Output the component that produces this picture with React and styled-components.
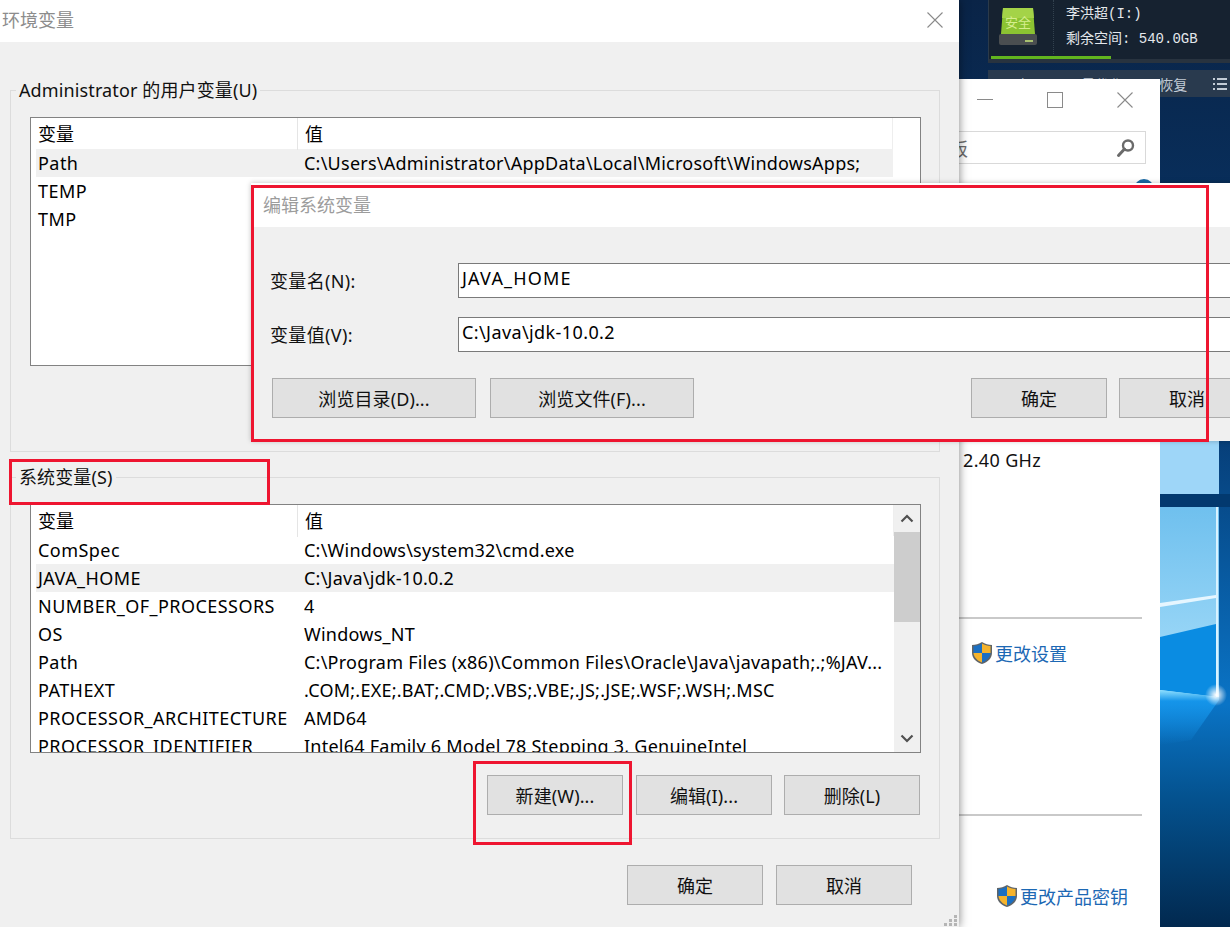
import React from "react";
import styled, { createGlobalStyle } from "styled-components";

const GlobalStyle = createGlobalStyle`
  html, body {
    margin: 0;
    padding: 0;
    background: #0b2a52;
  }
  body {
    font-family: "Noto Sans", "Noto Sans CJK SC", sans-serif;
    font-size: 18px;
    color: #000;
  }
  * { box-sizing: border-box; }
`;

const userVars = [
  ["Path", "C:\\Users\\Administrator\\AppData\\Local\\Microsoft\\WindowsApps;"],
  ["TEMP", ""],
  ["TMP", ""],
];

const systemVars = [
  ["ComSpec", "C:\\Windows\\system32\\cmd.exe"],
  ["JAVA_HOME", "C:\\Java\\jdk-10.0.2"],
  ["NUMBER_OF_PROCESSORS", "4"],
  ["OS", "Windows_NT"],
  ["Path", "C:\\Program Files (x86)\\Common Files\\Oracle\\Java\\javapath;.;%JAV..."],
  ["PATHEXT", ".COM;.EXE;.BAT;.CMD;.VBS;.VBE;.JS;.JSE;.WSF;.WSH;.MSC"],
  ["PROCESSOR_ARCHITECTURE", "AMD64"],
  ["PROCESSOR_IDENTIFIER", "Intel64 Family 6 Model 78 Stepping 3, GenuineIntel"],
];

const Screen = styled.div`
  position: relative;
  display: flex;
  width: 1230px;
  height: 927px;
  overflow: hidden;
`;

const MainDialog = styled.div`
  position: relative;
  z-index: 2;
  flex: 0 0 959px;
  display: flex;
  flex-direction: column;
  background: #f0f0f0;
  box-shadow: 0 0 9px rgba(0, 0, 0, 0.5);
`;

const TitleBar = styled.div`
  display: flex;
  align-items: center;
  justify-content: space-between;
  height: 42px;
  padding: 0 16px 3px 2px;
  background: #fff;
  color: #8c8c8c;
  line-height: 1;
`;

const Body = styled.div`
  display: flex;
  flex-direction: column;
  padding: 36px 19px 0 10px;
`;

const Group = styled.fieldset`
  height: 374px;
  margin: 0 0 13px;
  padding: 15px 18px 0 19px;
  border: 1px solid #dcdcdc;
  min-width: 0;
`;

const GroupTitle = styled.legend`
  margin-left: -14px;
  padding: 0 3px;
  height: 24px;
  line-height: 24px;
  letter-spacing: 0.12px;
  white-space: nowrap;
  color: #111;
`;

const List = styled.div`
  display: flex;
  height: 249px;
  overflow: hidden;
  background: #fff;
  border: 1px solid #828282;
`;

const ListContent = styled.div`
  flex: 1;
  min-width: 0;
  overflow: hidden;
`;

const ListHeader = styled.div`
  display: grid;
  grid-template-columns: 260px 1fr;
  height: 31px;
  line-height: 32px;
  padding-left: 7px;
  border-right: 1px solid #eee;

  span + span {
    padding-left: 7px;
    border-left: 1px solid #e5e5e5;
    margin-left: -1px;
  }
`;

const Row = styled.div`
  display: grid;
  grid-template-columns: 266px 1fr;
  height: 28px;
  line-height: 28px;
  margin-left: 5px;
  padding-left: 2px;
  white-space: nowrap;
  letter-spacing: 0.24px;
  background: ${(p) => (p.$selected ? "#f0f0f0" : "transparent")};

  span:first-child {
    letter-spacing: 0.45px;
  }
`;

const BlankGutter = styled.div`
  flex: 0 0 27px;
`;

const Scrollbar = styled.div`
  flex: 0 0 26px;
  display: flex;
  flex-direction: column;
  align-items: center;
  background: #f0f0f0;
`;

const ScrollArrow = styled.div`
  display: flex;
  align-items: center;
  justify-content: center;
  height: 27px;
  width: 100%;
`;

const ScrollThumb = styled.div`
  width: 100%;
  height: 90px;
  background: #cdcdcd;
`;

const ScrollTrack = styled.div`
  flex: 1;
`;

const Button = styled.button`
  flex: 0 0 ${(p) => p.$width || 136}px;
  height: 40px;
  padding: 0 0 1px;
  background: #e1e1e1;
  border: 1px solid #adadad;
  border-radius: 0;
  font: inherit;
  letter-spacing: 0.1px;
  color: #111;
  white-space: nowrap;
`;

const GroupButtons = styled.div`
  display: flex;
  justify-content: flex-end;
  gap: 12px;
  margin-top: 22px;
  margin-right: 1px;

  button:first-child {
    margin-right: 1px;
  }
`;

const DialogButtons = styled.div`
  display: flex;
  justify-content: flex-end;
  gap: 13px;
  margin-right: 28px;
  margin-top: 13px;
`;

const Grip = styled.svg`
  position: absolute;
  right: 1px;
  bottom: 0;
`;

const Desktop = styled.div`
  position: relative;
  flex: 1;
  background: linear-gradient(180deg, #0a1f3e 0%, #0b2a55 100%);
`;

const Wallpaper = styled.svg`
  position: absolute;
  top: 0;
  left: 0;
`;

const DriveWidget = styled.div`
  position: relative;
  display: flex;
  height: 63px;
  margin-left: 29px;
  padding: 8px 0 0 10px;
  background: #162230;
  border-left: 1px solid #2b3a4a;
  border-bottom: 4px solid #28333f;
`;

const DriveProgress = styled.div`
  position: absolute;
  left: 2px;
  bottom: 0;
  width: 120px;
  height: 3px;
  background: #62b51e;
`;

const DriveText = styled.div`
  margin: -8px 0 0 16px;
  padding: 2px 0 0 12px;
  border-left: 1px dotted #33424f;
  height: 54px;
  color: #e4e8ec;
  font-family: "Liberation Mono", "Noto Sans CJK SC", monospace;
  font-size: 14px;
  line-height: 25px;
  white-space: nowrap;
`;

const DriveToolbar = styled.div`
  position: relative;
  display: flex;
  align-items: center;
  justify-content: space-between;
  height: 27px;
  margin: 7px 0 0 29px;
  padding: 0 3px 0 12px;
  background: #293a4e;
  color: #c3ccd6;
  font-size: 14px;
`;

const ToolbarItems = styled.div`
  display: flex;
  gap: 36px;
  white-space: nowrap;
`;

const SystemWindow = styled.div`
  position: absolute;
  top: 79px;
  left: 0;
  bottom: 0;
  width: 201px;
  display: flex;
  flex-direction: column;
  overflow: hidden;
  background: #fff;
`;

const WindowControls = styled.div`
  display: flex;
  height: 42px;
  margin-left: -9px;
`;

const WindowControl = styled.div`
  flex: 0 0 70px;
  display: flex;
  align-items: center;
  justify-content: center;
`;

const SearchBox = styled.div`
  display: flex;
  align-items: center;
  justify-content: space-between;
  flex: 0 0 33px;
  width: 297px;
  margin: 10px 0 0 -110px;
  padding: 0 9px 0 10px;
  border: 1px solid #d9d9d9;
  color: #6d6d6d;
`;

const HelpDot = styled.div`
  flex: 0 0 20px;
  width: 20px;
  align-self: flex-end;
  margin: 15px 6px 0 0;
  border-radius: 50%;
  background: #1a6aa5;
`;

const SpecText = styled.div`
  margin: 249px 0 0 4px;
  height: 24px;
  line-height: 24px;
  letter-spacing: 0.35px;
  color: #111;
`;

const Divider = styled.div`
  flex: 0 0 2px;
  width: 183px;
  margin-top: ${(p) => p.$top}px;
  background: #c9c9c9;
`;

const ShieldLink = styled.div`
  display: flex;
  align-items: center;
  gap: 2px;
  height: 26px;
  margin: ${(p) => p.$top}px 0 0 ${(p) => p.$left}px;
  color: #1c68b4;
  white-space: nowrap;
`;

const EditDialog = styled.div`
  position: absolute;
  z-index: 3;
  top: 183px;
  left: 251px;
  width: 1030px;
  height: 258px;
  display: flex;
  flex-direction: column;
  background: #f0f0f0;
  box-shadow: 0 0 5px rgba(0, 0, 0, 0.25);
`;

const EditTitle = styled.div`
  display: flex;
  align-items: center;
  height: 44px;
  padding: 0 0 2px 12px;
  background: #fff;
  color: #9c9c9c;
`;

const EditBody = styled.div`
  display: flex;
  flex-direction: column;
  padding: 36px 0 0 19px;
`;

const FieldRow = styled.div`
  display: flex;
  margin-bottom: 19px;
`;

const FieldLabel = styled.div`
  flex: 0 0 188px;
  padding-top: 5px;
  line-height: 26px;
  letter-spacing: 0.35px;
  color: #111;
`;

const FieldValue = styled.div`
  width: 800px;
  height: 35px;
  padding: 0 3px;
  line-height: 29px;
  letter-spacing: ${(p) => p.$spacing}px;
  background: #fff;
  border: 1px solid #7a7a7a;
  white-space: nowrap;
`;

const EditButtons = styled.div`
  display: flex;
  gap: 14px;
  margin: 7px 0 0 2px;
`;

const EditButtonsRight = styled.div`
  display: flex;
  gap: 12px;
  margin-left: 263px;
`;

const Marker = styled.div`
  position: absolute;
  z-index: 4;
  left: ${(p) => p.$x}px;
  top: ${(p) => p.$y}px;
  width: ${(p) => p.$w}px;
  height: ${(p) => p.$h}px;
  border: 3px solid #ee1530;
  pointer-events: none;
`;

const Shield = () => (
  <svg width="22" height="24" viewBox="0 0 22 24">
    <path d="M11 1 C8 3 4.500 4 1 4 V12 C1 17 5 21 11 23 C17 21 21 17 21 12 V4 C17.500 4 14 3 11 1 Z" fill="#5f6468" />
    <path d="M11 2.500 C8.500 4 5.500 5 2.500 5 V12 H11 Z" fill="#1b6fc2" />
    <path d="M11 2.500 C13.500 4 16.500 5 19.500 5 V12 H11 Z" fill="#f5b32c" />
    <path d="M2.500 12 H11 V21.400 C6.500 19.800 3 16.500 2.500 12 Z" fill="#f5b32c" />
    <path d="M19.500 12 H11 V21.400 C15.500 19.800 19 16.500 19.500 12 Z" fill="#1b6fc2" />
  </svg>
);

const CloseGlyph = ({ size = 16, color = "#8a8a8a" }) => (
  <svg width={size} height={size} viewBox="0 0 16 16">
    <path d="M0.500 0.500 L15.500 15.500 M15.500 0.500 L0.500 15.500" stroke={color} strokeWidth="1.100" fill="none" />
  </svg>
);

const DriveIcon = () => (
  <svg width="38" height="38" viewBox="0 0 38 38">
    <path d="M4 0 H34 L36 26 H2 Z" fill="#8cc332" />
    <path d="M4 0 H34 L35 10 H3 Z" fill="#a4d348" />
    <rect x="0" y="26" width="38" height="11" rx="2" fill="#4a4e50" />
    <rect x="26" y="32" width="8" height="2" fill="#a8c070" />
    <text x="19" y="19" fontSize="13" textAnchor="middle" fill="#d6ee8e" fontFamily="'Noto Sans CJK SC', sans-serif">安全</text>
  </svg>
);

const SearchGlyph = () => (
  <svg width="20" height="20" viewBox="0 0 20 20">
    <circle cx="12" cy="7.500" r="5" fill="none" stroke="#6a6a6a" strokeWidth="2.400" />
    <path d="M8.500 11 L2.500 17.500" stroke="#6a6a6a" strokeWidth="3" strokeLinecap="round" />
  </svg>
);

const Chevron = ({ down }) => (
  <svg width="14" height="9" viewBox="0 0 14 9">
    <path d={down ? "M1.500 1.500 L7 7 L12.500 1.500" : "M1.500 7.500 L7 2 L12.500 7.500"} stroke="#505050" strokeWidth="2.200" fill="none" />
  </svg>
);

// window pane of the win10 wallpaper, coordinates are relative to the desktop area
const WallpaperArt = () => (
  <Wallpaper width="271" height="927" viewBox="0 0 271 927">
    <defs>
      <linearGradient id="wpBase" x1="0" y1="0" x2="0" y2="1">
        <stop offset="0" stopColor="#0a2447" />
        <stop offset="0.45" stopColor="#063a72" />
        <stop offset="0.76" stopColor="#0a74c6" />
        <stop offset="0.86" stopColor="#04528f" />
        <stop offset="1" stopColor="#02294f" />
      </linearGradient>
      <linearGradient id="wpGlow" x1="0" y1="0" x2="0" y2="1">
        <stop offset="0" stopColor="#8fe0ff" />
        <stop offset="0.2" stopColor="#1595ea" />
        <stop offset="1" stopColor="#1595ea" stopOpacity="0" />
      </linearGradient>
      <linearGradient id="wpPane" x1="0" y1="0" x2="0" y2="1">
        <stop offset="0" stopColor="#6fc0ee" />
        <stop offset="1" stopColor="#a8defa" />
      </linearGradient>
      <radialGradient id="wpStar">
        <stop offset="0" stopColor="#ffffff" />
        <stop offset="1" stopColor="#ffffff" stopOpacity="0" />
      </radialGradient>
    </defs>
    <rect width="271" height="927" fill="url(#wpBase)" />
    <rect x="201" y="440" width="59" height="54" fill="#9ed6f8" />
    <rect x="201" y="494" width="70" height="13" fill="#02396f" />
    <rect x="201" y="507" width="59" height="190" fill="url(#wpPane)" />
    <polygon points="201,637 257,624 257,697 201,690" fill="#0a8ce2" />
    <polygon points="201,603 257,595 257,598 201,607" fill="#e6f6ff" />
    <rect x="257" y="507" width="2" height="190" fill="#d8f2ff" />
    <polygon points="201,690 260,697 260,700 232,740 201,745" fill="url(#wpGlow)" />
    <circle cx="257" cy="695" r="11" fill="url(#wpStar)" />
  </Wallpaper>
);

export default function App() {
  return (
    <>
      <GlobalStyle />
      <Screen>
        <MainDialog>
          <TitleBar>
            <span>环境变量</span>
            <CloseGlyph />
          </TitleBar>
          <Body>
            <Group>
              <GroupTitle>Administrator 的用户变量(U)</GroupTitle>
              <List>
                <ListContent>
                  <ListHeader>
                    <span>变量</span>
                    <span>值</span>
                  </ListHeader>
                  {userVars.map(([name, value], i) => (
                    <Row key={name} $selected={i === 0}>
                      <span>{name}</span>
                      <span>{value}</span>
                    </Row>
                  ))}
                </ListContent>
                <BlankGutter />
              </List>
            </Group>
            <Group>
              <GroupTitle>系统变量(S)</GroupTitle>
              <List>
                <ListContent>
                  <ListHeader>
                    <span>变量</span>
                    <span>值</span>
                  </ListHeader>
                  {systemVars.map(([name, value]) => (
                    <Row key={name} $selected={name === "JAVA_HOME"}>
                      <span>{name}</span>
                      <span>{value}</span>
                    </Row>
                  ))}
                </ListContent>
                <Scrollbar>
                  <ScrollArrow><Chevron /></ScrollArrow>
                  <ScrollThumb />
                  <ScrollTrack />
                  <ScrollArrow><Chevron down /></ScrollArrow>
                </Scrollbar>
              </List>
              <GroupButtons>
                <Button>新建(W)...</Button>
                <Button>编辑(I)...</Button>
                <Button>删除(L)</Button>
              </GroupButtons>
            </Group>
            <DialogButtons>
              <Button>确定</Button>
              <Button>取消</Button>
            </DialogButtons>
          </Body>
          <Grip width="14" height="12" viewBox="0 0 14 12">
            <g fill="#b5b5b5">
              <rect x="10" y="0" width="3" height="3" />
              <rect x="5" y="4" width="3" height="3" />
              <rect x="10" y="4" width="3" height="3" />
              <rect x="0" y="8" width="3" height="3" />
              <rect x="5" y="8" width="3" height="3" />
              <rect x="10" y="8" width="3" height="3" />
            </g>
          </Grip>
        </MainDialog>

        <Desktop>
          <WallpaperArt />
          <DriveWidget>
            <DriveIcon />
            <DriveText>
              李洪超(I:)
              <br />
              剩余空间: 540.0GB
            </DriveText>
            <DriveProgress />
          </DriveWidget>
          <DriveToolbar>
            <ToolbarItems>
              <span>更改(A)</span>
              <span>最优化</span>
              <span>恢复</span>
            </ToolbarItems>
            <svg width="14" height="14" viewBox="0 0 14 14">
              <g fill="#c3ccd6">
                <rect x="0" y="1" width="2" height="2" />
                <rect x="4" y="1" width="10" height="2" />
                <rect x="0" y="6" width="2" height="2" />
                <rect x="4" y="6" width="10" height="2" />
                <rect x="0" y="11" width="2" height="2" />
                <rect x="4" y="11" width="10" height="2" />
              </g>
            </svg>
          </DriveToolbar>

          <SystemWindow>
            <WindowControls>
              <WindowControl>
                <svg width="16" height="2" viewBox="0 0 16 2"><rect width="16" height="1" fill="#8a8a8a" /></svg>
              </WindowControl>
              <WindowControl>
                <svg width="16" height="16" viewBox="0 0 16 16"><rect x="0.500" y="0.500" width="15" height="15" fill="none" stroke="#8a8a8a" /></svg>
              </WindowControl>
              <WindowControl>
                <CloseGlyph />
              </WindowControl>
            </WindowControls>
            <SearchBox>
              <span>搜索控制面板</span>
              <SearchGlyph />
            </SearchBox>
            <HelpDot />
            <SpecText>2.40 GHz</SpecText>
            <Divider $top={145} />
            <ShieldLink $top={21} $left={12}>
              <Shield />
              更改设置
            </ShieldLink>
            <Divider $top={148} />
            <ShieldLink $top={67} $left={37}>
              <Shield />
              更改产品密钥
            </ShieldLink>
          </SystemWindow>
        </Desktop>

        <EditDialog>
          <EditTitle>编辑系统变量</EditTitle>
          <EditBody>
            <FieldRow>
              <FieldLabel>变量名(N):</FieldLabel>
              <FieldValue $spacing={1.2}>JAVA_HOME</FieldValue>
            </FieldRow>
            <FieldRow>
              <FieldLabel>变量值(V):</FieldLabel>
              <FieldValue $spacing={0.4}>C:\Java\jdk-10.0.2</FieldValue>
            </FieldRow>
            <EditButtons>
              <Button $width={204}>浏览目录(D)...</Button>
              <Button $width={204}>浏览文件(F)...</Button>
              <EditButtonsRight>
                <Button>确定</Button>
                <Button>取消</Button>
              </EditButtonsRight>
            </EditButtons>
          </EditBody>
        </EditDialog>

        <Marker $x={251} $y={185} $w={958} $h={257} />
        <Marker $x={9} $y={459} $w={261} $h={46} />
        <Marker $x={473} $y={761} $w={159} $h={84} />
      </Screen>
    </>
  );
}
